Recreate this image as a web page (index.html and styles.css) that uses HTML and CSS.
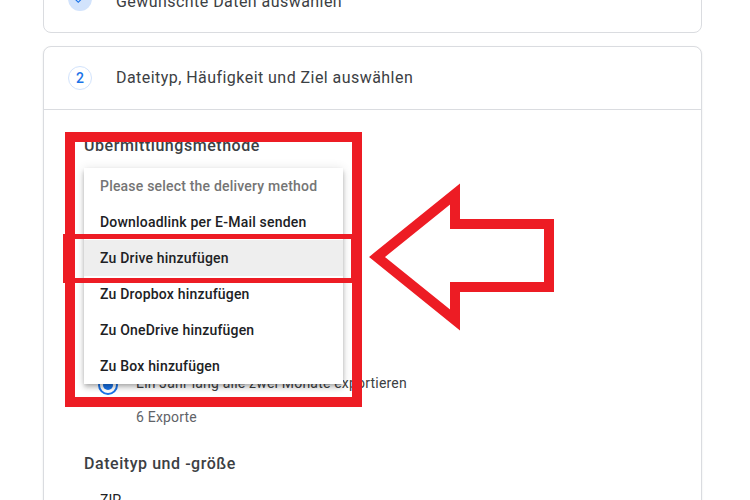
FILE: index.html
```html
<!DOCTYPE html>
<html lang="de">
<head>
<meta charset="utf-8">
<title>Export</title>
<link rel="stylesheet" href="styles.css">
</head>
<body>
<div class="page">
  <section class="card card-done">
    <div class="card-head">
      <span class="step step-done">
        <svg width="14" height="14" viewBox="0 0 24 24"><path d="M9 16.2 4.8 12l-1.4 1.4L9 19 21 7l-1.4-1.4z" fill="#1a73e8"/></svg>
      </span>
      <span class="head-title">Gewünschte Daten auswählen</span>
    </div>
  </section>

  <section class="card card-open">
    <div class="card-head card-head-line">
      <span class="step">2</span>
      <span class="head-title">Dateityp, Häufigkeit und Ziel auswählen</span>
    </div>
    <div class="card-body">
      <h3 class="sec-title">Übermittlungsmethode</h3>
      <div class="select-space"></div>
      <div class="radio-row">
        <span class="radio"><span class="radio-dot"></span></span>
        <span class="radio-label">Ein Jahr lang alle zwei Monate exportieren</span>
      </div>
      <div class="radio-sub">6 Exporte</div>
      <h3 class="sec-title sec-title-2">Dateityp und -größe</h3>
      <div class="zip">ZIP</div>

      <ul class="menu">
        <li class="menu-item placeholder">Please select the delivery method</li>
        <li class="menu-item">Downloadlink per E-Mail senden</li>
        <li class="menu-item active">Zu Drive hinzufügen</li>
        <li class="menu-item">Zu Dropbox hinzufügen</li>
        <li class="menu-item">Zu OneDrive hinzufügen</li>
        <li class="menu-item">Zu Box hinzufügen</li>
      </ul>
    </div>
  </section>

  <div class="mark mark-big"></div>
  <div class="mark mark-small"></div>
  <svg class="arrow" width="750" height="500" viewBox="0 0 750 500">
    <polygon points="377,257 455,194 455,224 549,224 549,287 455,287 455,320" fill="none" stroke="#ed1c24" stroke-width="10" stroke-linejoin="miter"/>
  </svg>
</div>
</body>
</html>
```

FILE: styles.css
```css
html, body {
  margin: 0;
  padding: 0;
  background: #ffffff;
}
body {
  font-family: Roboto, "Liberation Sans", Arial, sans-serif;
  color: #202124;
  overflow: hidden;
  height: 500px;
}
.page {
  position: relative;
  padding: 0 48px 0 43px;
  height: 500px;
  overflow: hidden;
}
.card {
  box-sizing: border-box;
  border: 1px solid #dadce0;
  border-radius: 8px;
  background: #fff;
}
.card-done {
  margin-top: -40px;
  height: 73px;
  overflow: hidden;
}
.card-done .card-head {
  padding-top: 26px;
  align-items: flex-start;
}
.card-open {
  margin-top: 13px;
  height: 520px;
  box-shadow: 0 1px 2px rgba(60, 64, 67, 0.12);
}
.card-head {
  display: flex;
  align-items: center;
  gap: 24px;
  padding-left: 24px;
  height: 62px;
  box-sizing: border-box;
}
.card-head-line {
  border-bottom: 1px solid #dadce0;
  height: 63px;
}
.step {
  box-sizing: border-box;
  width: 24px;
  height: 24px;
  border-radius: 50%;
  border: 1px solid #d2e3fc;
  color: #1a73e8;
  font-size: 14px;
  font-weight: 500;
  display: flex;
  align-items: center;
  justify-content: center;
  flex: none;
}
.step-done {
  background: #d2e3fc;
  border: none;
}
.head-title {
  font-size: 16px;
  line-height: 24px;
  color: #3c4043;
  letter-spacing: 0.45px;
}
.card-done .head-title {
  margin-top: 3px;
}
.card-body {
  position: relative;
  padding: 24px 0 0 40px;
}
.sec-title {
  margin: 0;
  font-size: 16px;
  font-weight: 500;
  line-height: 24px;
  color: #3c4043;
  letter-spacing: 0.55px;
}
.select-space {
  height: 215px;
}
.radio-row {
  display: flex;
  align-items: center;
  gap: 18px;
  padding-left: 14px;
  height: 20px;
}
.radio {
  box-sizing: border-box;
  width: 20px;
  height: 20px;
  border-radius: 50%;
  border: 2px solid #1a73e8;
  display: flex;
  align-items: center;
  justify-content: center;
  margin-top: 4px;
}
.radio-dot {
  width: 10px;
  height: 10px;
  border-radius: 50%;
  background: #1a73e8;
}
.radio-label {
  font-size: 14px;
  line-height: 20px;
  color: #3c4043;
  letter-spacing: 0.2px;
}
.radio-sub {
  margin-top: 14px;
  padding-left: 52px;
  font-size: 14px;
  line-height: 20px;
  color: #5f6368;
  letter-spacing: 0.2px;
}
.sec-title-2 {
  margin-top: 25px;
}
.zip {
  margin-top: 14px;
  padding-left: 16px;
  font-size: 14px;
  line-height: 20px;
  color: #202124;
}
.menu {
  position: absolute;
  left: 40px;
  top: 58px;
  width: 259px;
  margin: 0;
  padding: 0;
  list-style: none;
  background: #fff;
  box-shadow: 0 2px 4px -1px rgba(0, 0, 0, 0.2), 0 4px 5px 0 rgba(0, 0, 0, 0.14), 0 1px 10px 0 rgba(0, 0, 0, 0.12);
}
.menu-item {
  height: 36px;
  line-height: 36px;
  padding-left: 16px;
  font-size: 14px;
  font-weight: 500;
  color: #202124;
  white-space: nowrap;
  letter-spacing: 0.2px;
}
.menu-item.placeholder {
  color: #757575;
}
.menu-item.active {
  background: #eeeeee;
}
.mark {
  position: absolute;
  box-sizing: border-box;
  border: 10px solid #ed1c24;
}
.mark-big {
  left: 65px;
  top: 132px;
  width: 297px;
  height: 275px;
}
.mark-small {
  left: 63px;
  top: 234px;
  width: 293px;
  height: 49px;
  border-width: 5px;
}
.arrow {
  position: absolute;
  left: 0;
  top: 0;
  pointer-events: none;
}
```
